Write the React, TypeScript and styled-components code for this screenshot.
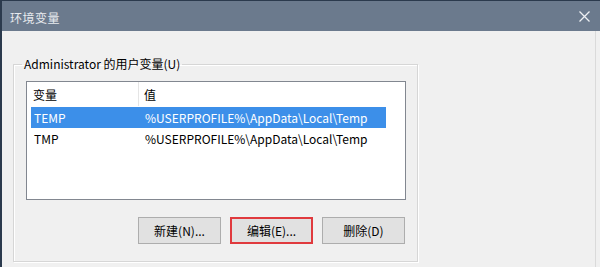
import React from "react";
import styled, { createGlobalStyle } from "styled-components";

const GlobalStyle = createGlobalStyle`
  html, body {
    margin: 0;
    padding: 0;
    background: #f0f0f0;
  }
  body {
    font-family: "Noto Sans CJK SC", "Noto Sans", sans-serif;
    font-size: 12px;
    color: #000;
  }
`;

const Window = styled.div`
  width: 600px;
  height: 267px;
  box-sizing: border-box;
  display: flex;
  flex-direction: column;
  overflow: hidden;
  border-left: 2px solid #2b3a4d;
  border-top: 1px solid #2b3a4d;
`;

const TitleBar = styled.div`
  height: 30px;
  flex-shrink: 0;
  background: #6b7a8d;
  display: flex;
  align-items: center;
  justify-content: space-between;
  padding: 0 10px 0 8px;
`;

const Title = styled.span`
  color: #e8ebef;
  font-size: 12px;
  letter-spacing: 0.5px;
  padding-top: 2px;
`;

const CloseIcon = styled.svg`
  width: 11px;
  height: 11px;
`;

const Body = styled.div`
  flex: 1;
  background: #f0f0f0;
  box-shadow: inset -4px 0 0 #f0f0f0, inset -5px 0 0 #dadada;
  padding: 25px 0 0 11px;
`;

const GroupBox = styled.fieldset`
  width: 405px;
  height: 206px;
  box-sizing: border-box;
  margin: 0;
  padding: 9px 11px 0 8px;
  border: 1px solid #d6d6d6;
  box-shadow: inset 1px 1px 0 #fff, 1px 1px 0 #fff;
  display: flex;
  flex-direction: column;
`;

const Legend = styled.legend`
  padding: 0 2px;
  line-height: 16px;
`;

const ListView = styled.div`
  margin-left: 4px;
  width: 380px;
  height: 119px;
  box-sizing: border-box;
  border: 1px solid #828790;
  background: #fff;
  display: flex;
  flex-direction: column;
  padding-left: 4px;
`;

const HeadRow = styled.div`
  width: 355px;
  height: 24px;
  display: flex;
  align-items: center;
`;

const Row = styled.div<{ $selected?: boolean }>`
  width: 355px;
  height: 21px;
  display: flex;
  align-items: center;
  background: ${(p) => (p.$selected ? "#3c8fe9" : "transparent")};
  color: ${(p) => (p.$selected ? "#fff" : "#000")};
  margin-top: ${(p) => (p.$selected ? "1px" : "0")};
`;

const NameCell = styled.div`
  width: 108px;
  padding-left: 3px;
  box-sizing: border-box;
  white-space: nowrap;
`;

const ValueCell = styled.div`
  flex: 1;
  padding-left: 6px;
  white-space: nowrap;
`;

const HeadName = styled(NameCell)`
  padding-left: 2px;
  height: 100%;
  display: flex;
  align-items: center;
  border-right: 1px solid #e5e5e5;
`;

const HeadValue = styled(ValueCell)`
  padding-left: 5px;
`;

const ButtonRow = styled.div`
  display: flex;
  justify-content: flex-end;
  gap: 9px;
  margin-top: 17px;
  margin-right: 1px;
`;

const Button = styled.button<{ $marked?: boolean }>`
  width: 83px;
  height: 27px;
  box-sizing: border-box;
  font-family: inherit;
  font-size: 12px;
  color: #000;
  background: #e1e1e1;
  border: ${(p) => (p.$marked ? "2px solid #e03a3e" : "1px solid #adadad")};
  padding: 0;
`;

const App: React.FC = () => {
  return (
    <>
      <GlobalStyle />
      <Window>
        <TitleBar>
          <Title>环境变量</Title>
          <CloseIcon viewBox="0 0 11 11">
            <path d="M0.5 0.5 L10.5 10.5 M10.5 0.5 L0.5 10.5" stroke="#eef0f3" strokeWidth="1.3" />
          </CloseIcon>
        </TitleBar>
        <Body>
          <GroupBox>
            <Legend>Administrator 的用户变量(U)</Legend>
            <ListView>
              <HeadRow>
                <HeadName>变量</HeadName>
                <HeadValue>值</HeadValue>
              </HeadRow>
              <Row $selected>
                <NameCell>TEMP</NameCell>
                <ValueCell>%USERPROFILE%\AppData\Local\Temp</ValueCell>
              </Row>
              <Row>
                <NameCell>TMP</NameCell>
                <ValueCell>%USERPROFILE%\AppData\Local\Temp</ValueCell>
              </Row>
            </ListView>
            <ButtonRow>
              <Button>新建(N)...</Button>
              <Button $marked>编辑(E)...</Button>
              <Button>删除(D)</Button>
            </ButtonRow>
          </GroupBox>
        </Body>
      </Window>
    </>
  );
};

export default App;
